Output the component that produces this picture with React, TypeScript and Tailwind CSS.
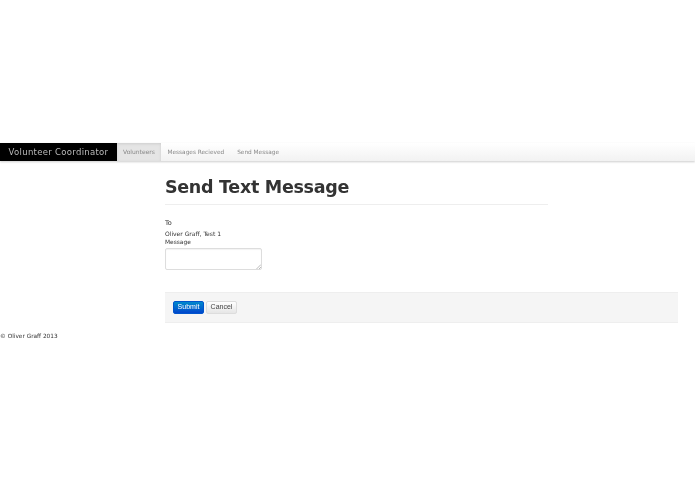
export default function App() {
  return (
    <div className="min-h-[494px] bg-white font-['DejaVu_Sans',sans-serif] text-[#333] blur-[0.3px]">
      <div className="h-[143px]" />

      <nav className="flex h-[18px] items-stretch bg-gradient-to-b from-white to-[#f2f2f2] shadow-[0_1px_2px_rgba(0,0,0,0.2)]">
        <a className="flex w-[117px] items-center justify-center bg-black text-[8.5px] tracking-[0.3px] text-[#bbb]">
          Volunteer Coordinator
        </a>
        <a className="flex w-[44px] items-center justify-center bg-[#e5e5e5] pb-[1px] text-[6px] text-[#888] shadow-[inset_0_1px_3px_rgba(0,0,0,0.1)]">
          Volunteers
        </a>
        <a className="flex items-center px-[6.5px] text-[5.8px] text-[#888]">Messages Recieved</a>
        <a className="flex items-center px-[6.5px] text-[5.8px] text-[#888]">Send Message</a>
      </nav>

      <main className="ml-[165px] mr-[17px]">
        <div className="mt-[15px] w-[383px] border-b border-[#eee] pb-[6px]">
          <h1 className="text-[17.5px] font-bold leading-[22px] tracking-[-0.3px] text-[#333]">Send Text Message</h1>
        </div>

        <form className="mt-[13px]">
          <label className="block pt-[1px] text-[6.5px] leading-[9px]">To</label>
          <p className="mt-[1px] text-[6px] leading-[9px]">Oliver Graff, Test 1</p>
          <label className="block text-[5.9px] leading-[8px]">Message</label>
          <div className="relative mt-[2px] w-[97px]">
            <textarea className="block h-[22px] w-full resize-none rounded-[2px] border border-[#ddd] bg-white shadow-[inset_0_1px_1px_rgba(0,0,0,0.05)]" />
            <svg className="absolute bottom-[1px] right-[1px] h-[5px] w-[5px]" viewBox="0 0 5 5">
              <path d="M0.5 5 L5 0.5 M3 5 L5 3" stroke="#aaa" strokeWidth="0.8" />
            </svg>
          </div>

          <div className="mt-[22px] flex h-[31px] items-center gap-[2px] border-y border-[#eee] bg-[#f5f5f5] pl-[8px]">
            <button
              type="button"
              className="h-[13px] w-[31px] rounded-[2px] border border-[#0055cc] bg-gradient-to-b from-[#0088cc] to-[#0044cc] font-['Liberation_Sans',sans-serif] text-[7px] text-white"
            >
              Submit
            </button>
            <button
              type="button"
              className="h-[13px] w-[31px] rounded-[2px] border border-[#ddd] bg-gradient-to-b from-white to-[#e6e6e6] font-['Liberation_Sans',sans-serif] text-[7px] text-[#444]"
            >
              Cancel
            </button>
          </div>
        </form>
      </main>

      <footer className="mt-[9px] text-[5.8px] leading-[9px] text-[#333]">© Oliver Graff 2013</footer>
    </div>
  );
}
